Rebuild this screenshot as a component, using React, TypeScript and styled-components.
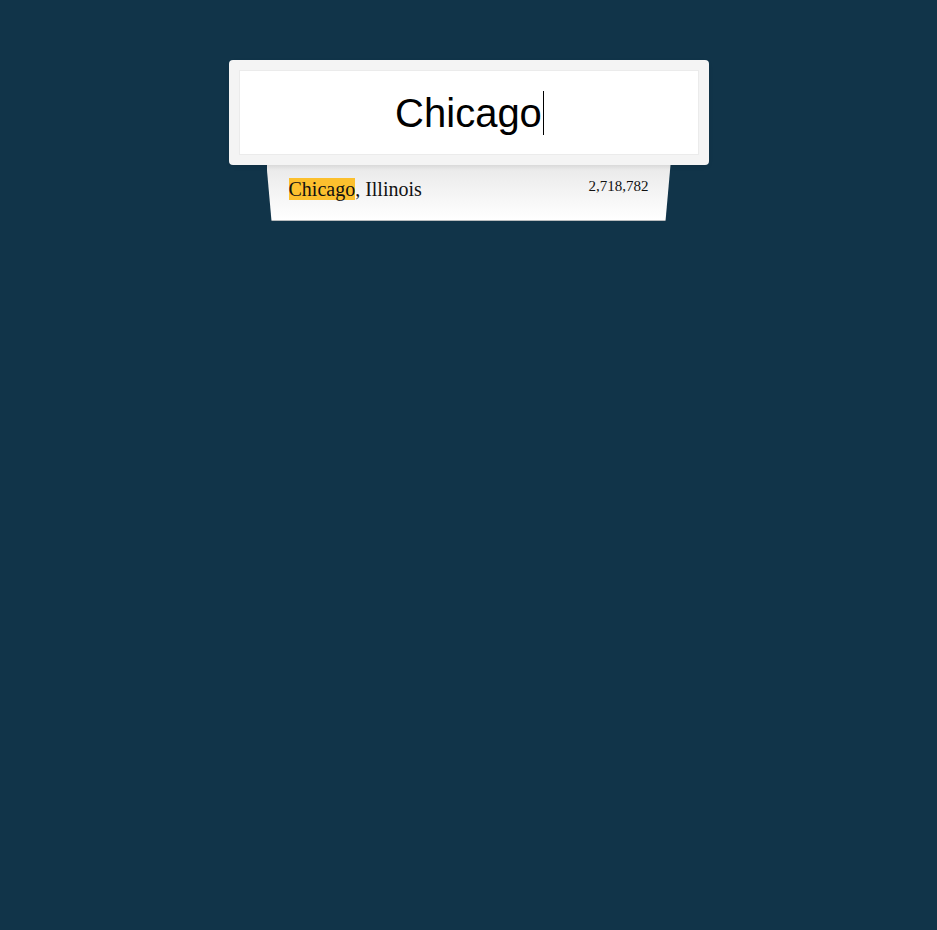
import React from "react";
import styled, { createGlobalStyle } from "styled-components";

const Global = createGlobalStyle`
  html, body { margin: 0; padding: 0; background: #113449; }
  body { min-height: 930px; font-family: "Liberation Serif", serif; }
`;

const Page = styled.div`
  display: flex;
  flex-direction: column;
  align-items: center;
  padding-top: 60px;
`;

const Widget = styled.div`
  width: 480px;
  display: flex;
  flex-direction: column;
`;

const SearchBox = styled.div`
  background: #f4f4f4;
  border-radius: 4px;
  padding: 10px 10px 10px 10px;
  position: relative;
  z-index: 1;
  box-shadow: 0 2px 4px rgba(0, 0, 0, 0.08);
`;

const Field = styled.div`
  height: 85px;
  background: #fff;
  border: 1px solid #ebebeb;
  display: flex;
  align-items: center;
  justify-content: center;
  padding-top: 2px;
  padding-left: 2px;
  box-sizing: border-box;
  font-family: "Liberation Sans", Arial, sans-serif;
  font-size: 40px;
  color: #000;
`;

const Caret = styled.span`
  display: inline-block;
  width: 1px;
  height: 44px;
  background: #000;
  margin-left: 1px;
  margin-top: -2px;
`;

const Results = styled.ul`
  list-style: none;
  margin: 0 38px;
  padding: 0;
  clip-path: polygon(0 0, 100% 0, calc(100% - 5px) 100%, 5px 100%);
`;

const Result = styled.li`
  display: flex;
  justify-content: space-between;
  align-items: flex-start;
  height: 56px;
  box-sizing: border-box;
  padding: 13px 22px 0 22px;
  background: linear-gradient(#e9e9e9, #ffffff);
  border-bottom: 1px solid #b9bcbe;
  color: #111;
`;

const Name = styled.span`
  font-size: 20px;
`;

const Mark = styled.mark`
  background: #fcc02e;
  color: inherit;
`;

const Population = styled.span`
  font-size: 15px;
`;

export default function App() {
  return (
    <Page>
      <Global />
      <Widget>
        <SearchBox>
          <Field>
            Chicago
            <Caret />
          </Field>
        </SearchBox>
        <Results>
          <Result>
            <Name>
              <Mark>Chicago</Mark>, Illinois
            </Name>
            <Population>2,718,782</Population>
          </Result>
        </Results>
      </Widget>
    </Page>
  );
}
